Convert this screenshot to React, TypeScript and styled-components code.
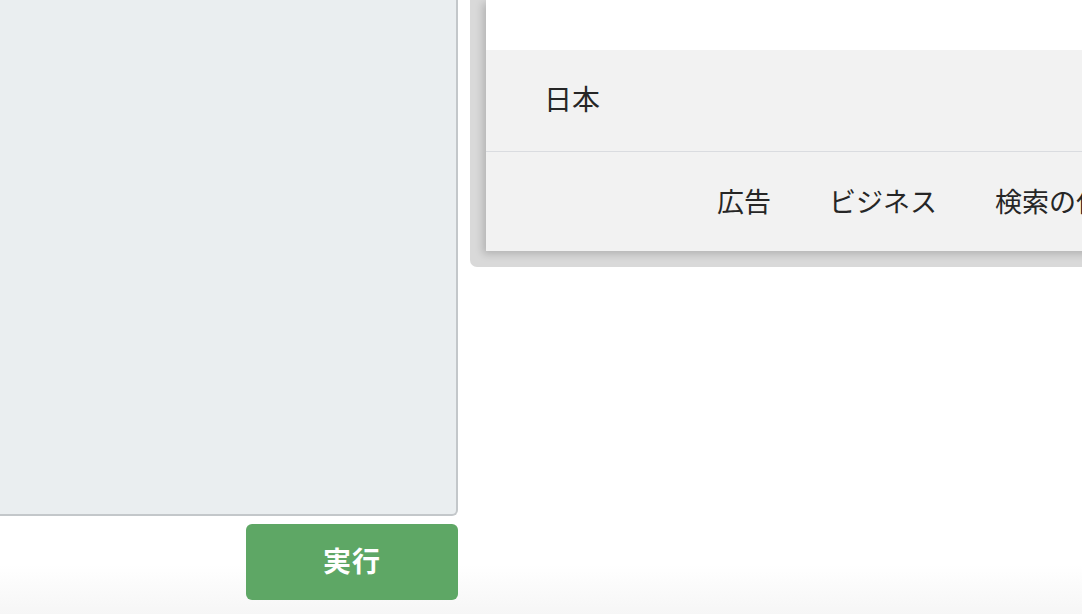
import React from "react";
import styled, { createGlobalStyle } from "styled-components";

const GlobalStyle = createGlobalStyle`
  html, body {
    margin: 0;
    padding: 0;
    overflow: hidden;
  }
  body {
    font-family: "Noto Sans CJK JP", "Noto Sans", sans-serif;
    background: linear-gradient(to bottom, #ffffff 0px, #ffffff 565px, #f6f6f6 614px);
    height: 614px;
  }
`;

const Page = styled.div`
  display: flex;
  align-items: flex-start;
  gap: 12px;
  width: 1082px;
  height: 614px;
  overflow: hidden;
`;

const EditorColumn = styled.div`
  width: 458px;
  flex-shrink: 0;
  display: flex;
  flex-direction: column;
  align-items: flex-end;
`;

const Editor = styled.textarea`
  box-sizing: border-box;
  width: 458px;
  height: 516px;
  margin: 0;
  background: #eaeef0;
  border: none;
  border-right: 2px solid #c3c7ca;
  border-bottom: 2px solid #c3c7ca;
  border-bottom-right-radius: 6px;
  resize: none;
  outline: none;
`;

const RunButton = styled.button`
  margin-top: 8px;
  width: 212px;
  height: 76px;
  padding: 0 0 5px;
  border: none;
  border-radius: 6px;
  background: #5ea765;
  color: #ffffff;
  font-family: "Noto Sans CJK JP", sans-serif;
  font-weight: 700;
  font-size: 28px;
  letter-spacing: 1px;
  cursor: pointer;
`;

const PreviewFrame = styled.div`
  flex: 1;
  min-width: 0;
  background: #d9d9d9;
  padding: 0 0 16px 16px;
  border-bottom-left-radius: 7px;
  height: 251px;
`;

const PreviewPage = styled.div`
  width: 700px;
  height: 251px;
  background: #ffffff;
  box-shadow: -3px 3px 8px rgba(0, 0, 0, 0.18);
  display: flex;
  flex-direction: column;
`;

const TopBlank = styled.div`
  height: 50px;
  background: #ffffff;
`;

const Footer = styled.div`
  flex: 1;
  background: #f2f2f2;
  color: #262626;
  font-family: "Noto Sans CJK JP", sans-serif;
  font-size: 28px;
`;

const Country = styled.div`
  box-sizing: border-box;
  height: 102px;
  padding: 0 0 5px 58px;
  display: flex;
  align-items: center;
  border-bottom: 1px solid #dadce0;
`;

const LinkRow = styled.div`
  box-sizing: border-box;
  height: 99px;
  padding: 0 0 3px 231px;
  display: flex;
  align-items: center;
  gap: 58px;
  font-size: 27px;
  white-space: nowrap;
`;

const FooterLink = styled.a`
  color: #262626;
  text-decoration: none;
`;

const links = ["広告", "ビジネス", "検索の仕組み"];

export default function App() {
  return (
    <>
      <GlobalStyle />
      <Page>
        <EditorColumn>
          <Editor spellCheck={false} />
          <RunButton>実行</RunButton>
        </EditorColumn>
        <PreviewFrame>
          <PreviewPage>
            <TopBlank />
            <Footer>
              <Country>日本</Country>
              <LinkRow>
                {links.map((l) => (
                  <FooterLink key={l} href="#">
                    {l}
                  </FooterLink>
                ))}
              </LinkRow>
            </Footer>
          </PreviewPage>
        </PreviewFrame>
      </Page>
    </>
  );
}
